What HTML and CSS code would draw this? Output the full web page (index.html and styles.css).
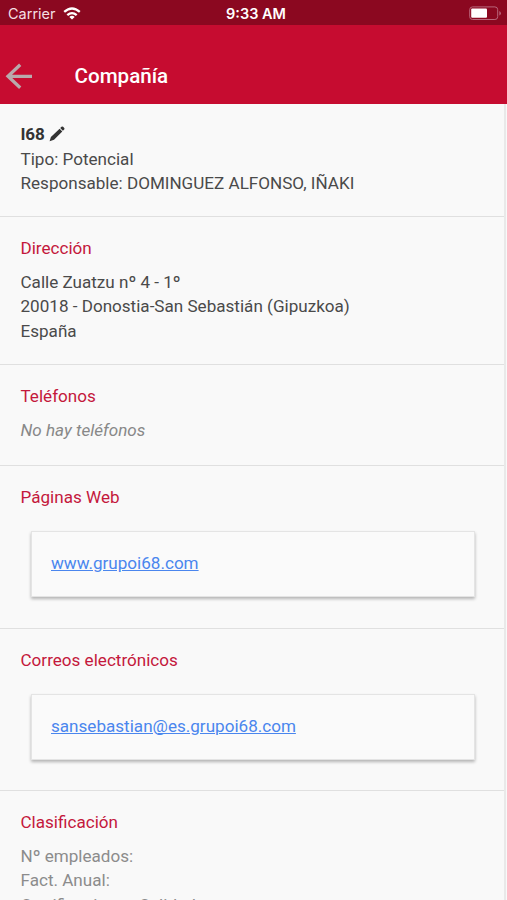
FILE: index.html
```html
<!DOCTYPE html>
<html lang="es">
<head>
<meta charset="utf-8">
<title>Compañía</title>
<link rel="stylesheet" href="styles.css">
</head>
<body>
<div class="status">
  <div class="carrier"><span>Carrier</span>
    <svg class="wifi" viewBox="0 0 18 13" width="18" height="13"><g fill="none" stroke="#fff" stroke-width="2.3"><path d="M1.2 4.9Q9-2 16.8 4.9"/><path d="M4.3 8.2Q9 4.1 13.7 8.2"/></g><path d="M6.3 9.9Q9 7.8 11.7 9.9L9 12.6Z" fill="#fff"/></svg>
  </div>
  <span class="time">9:33 AM</span>
  <svg class="battery" viewBox="0 0 33 15" width="33" height="15"><rect x=".7" y=".9" width="28" height="12.6" rx="2.8" fill="none" stroke="#b9667a" stroke-width="1"/><rect x="2.2" y="2.6" width="15.8" height="9.2" rx="1" fill="#fff"/><path d="M30.3 5v4.6q1.6-.7 1.6-2.3T30.3 5Z" fill="#b9667a"/></svg>
</div>
<header class="bar">
  <svg class="back" viewBox="0 0 28 28" width="28" height="28"><path d="M15.2 2.8L3 14.3l12.2 11.5M3 14.3H27" fill="none" stroke="#b9a9ac" stroke-width="3.3"/></svg>
  <h1>Compañía</h1>
</header>
<main>
  <section class="company">
    <p class="name"><b>I68</b>
      <svg class="pencil" viewBox="0 0 16 16" width="16" height="16"><path d="M.6 15.3l1.3-4.4L10.6 2.7l2.7 2.7-8.3 8.4ZM11.2 2.1l1.3-1.3q.8-.7 1.6 0l1.1 1.1q.7.8 0 1.6l-1.3 1.3Z" fill="#333"/></svg>
    </p>
    <p>Tipo: Potencial</p>
    <p>Responsable: DOMINGUEZ ALFONSO, IÑAKI</p>
  </section>
  <section class="address">
    <h2>Dirección</h2>
    <p>Calle Zuatzu nº 4 - 1º</p>
    <p>20018 - Donostia-San Sebastián (Gipuzkoa)</p>
    <p>España</p>
  </section>
  <section class="phones">
    <h2>Teléfonos</h2>
    <p class="empty">No hay teléfonos</p>
  </section>
  <section class="web">
    <h2>Páginas Web</h2>
    <div class="card"><a href="#">www.grupoi68.com</a></div>
  </section>
  <section class="mail">
    <h2>Correos electrónicos</h2>
    <div class="card"><a href="#">sansebastian@es.grupoi68.com</a></div>
  </section>
  <section class="classification">
    <h2>Clasificación</h2>
    <p>Nº empleados:</p>
    <p>Fact. Anual:</p>
    <p>Certificaciones Calidad:</p>
  </section>
</main>
</body>
</html>
```
FILE: styles.css
```css
* { box-sizing: border-box; }
html, body { margin: 0; height: 100%; overflow: hidden; }
body {
  display: flex; flex-direction: column;
  background: #f9f9f9; color: #4a4a4a;
  font: 17.08px/24.5px Roboto, sans-serif;
}
h1, h2, p { margin: 0; }
.status {
  flex: none; height: 25px; padding: 2px 4px 0 8px;
  display: grid; grid-template-columns: 1fr auto 1fr; align-items: center;
  background: #8b0820; color: #fff;
  font: 14.5px/23px Inter, sans-serif;
}
.carrier { display: flex; align-items: center; gap: 7px; color: #f4dfe3; }
.wifi { margin-top: -1px; }
.time { font-weight: 600; margin-left: 1px; }
.battery { justify-self: end; margin: -1px 1px 0 0; }
.bar {
  flex: none; height: 78.5px; padding: 23.5px 0 0 5px;
  display: flex; align-items: center; gap: 41.5px;
  background: #c60c30; color: #fff;
}
.bar h1 { font-size: 20.6px; line-height: 26px; font-weight: 500; }
main { flex: 1; min-height: 0; overflow: hidden; margin-right: 1px; border-right: 2px solid #e9e9e9; }
section { padding: 18.5px 20.5px 0; border-bottom: 1.5px solid #e0e0e0; }
h2 { margin-bottom: 9.5px; font-size: 17.08px; line-height: 24.5px; font-weight: 400; color: #c4183c; }
.company { height: 113.5px; }
.name { display: flex; align-items: center; gap: 4px; color: #333; }
.name b { letter-spacing: -.2px; }
.address { height: 148px; }
.phones { height: 101px; }
.web { height: 163px; }
.mail { height: 162px; }
.classification { height: 180px; color: #8c8c8c; }
.empty { font-style: italic; color: #888; }
.card {
  height: 66px; margin: 22px 9px 0 10px; padding: 18.5px 19.5px;
  border: 1px solid #e4e4e4; background: #fafafa;
  box-shadow: 0 2px 3px rgba(0, 0, 0, .28);
}
a { color: #4a86ee; text-decoration: underline; }
```
